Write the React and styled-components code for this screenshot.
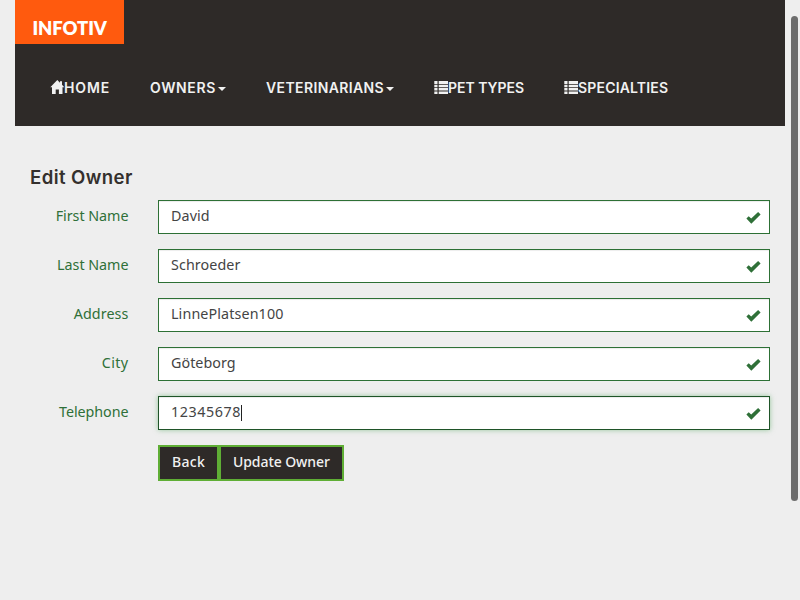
import React from 'react';
import styled, { createGlobalStyle } from 'styled-components';

const Global = createGlobalStyle`
  *, *::before, *::after { box-sizing: border-box; }
  html, body { margin: 0; height: 100%; overflow: hidden; background: #eeeeee; }
  body { font: 14.3px/20px "Noto Sans", sans-serif; color: #34302d; }
`;

const Page = styled.div`
  height: 600px;
  display: flex;
  justify-content: space-between;
  padding-left: 15px;
`;
const Main = styled.main`
  width: 770px;
`;
const Navbar = styled.header`
  height: 126px;
  background: #2e2a28;
`;
const Brand = styled.div`
  width: 109px;
  height: 44px;
  padding: 16px 0 0 17.5px;
  background: #ff5a0e;
  color: #fff;
  font: 800 18.4px/25px Lato, sans-serif;
  letter-spacing: -0.1px;
`;
const Nav = styled.nav`
  display: flex;
  gap: 40px;
  padding: 34px 0 0 35px;
`;
const NavLink = styled.a`
  display: flex;
  align-items: center;
  height: 20px;
  color: #f1f1f1;
  white-space: nowrap;
  font: 600 14px/20px Inter, sans-serif;
`;
const NavText = styled.span`
  width: ${p => p.$w}px;
  letter-spacing: ${p => p.$ls}px;
`;
const Caret = styled.span`
  margin: 2px 0 0 2px;
  border: 4px solid transparent;
  border-top-color: #f1f1f1;
  border-bottom: 0;
`;
const Icon = styled.svg`
  display: block;
  flex: none;
  width: 14px;
  height: 14px;
  fill: currentColor;
  overflow: visible;
`;
const Form = styled.form`
  padding: 40px 15px 0;
`;
const Title = styled.h2`
  margin: 0 0 12px;
  height: 22px;
  font: 600 18.6px/23px Inter, sans-serif;
  letter-spacing: 0.42px;
  color: #34302d;
`;
const Row = styled.div`
  display: grid;
  grid-template-columns: 98.5px 612px;
  column-gap: 29.5px;
  height: 34px;
  margin-bottom: 15px;
`;
const Label = styled.label`
  color: #2f7038;
  line-height: 32px;
  text-align: right;
  white-space: nowrap;
  letter-spacing: ${p => p.$ls}px;
`;
const Field = styled.div`
  display: flex;
  align-items: center;
  justify-content: space-between;
  height: 34px;
  padding: 1px 9px 0 12px;
  background: #fff;
  border: 1px solid ${p => (p.$focus ? '#1f5428' : '#2d7035')};
  box-shadow: ${p => (p.$focus
    ? 'inset 0 1px 1px rgba(0,0,0,.075), 0 0 5px rgba(90,170,100,.6)'
    : 'inset 0 1px 1px rgba(0,0,0,.075)')};
  color: #2f7038;
`;
const Value = styled.span`
  display: flex;
  align-items: center;
  height: 31px;
  padding-bottom: 3px;
  color: #444;
  letter-spacing: ${p => p.$ls}px;
`;
const TextCursor = styled.span`
  width: 1px;
  height: 16px;
  margin-top: 2px;
  background: #222;
`;
const Actions = styled.div`
  display: flex;
  padding-left: 128px;
`;
const Button = styled.button`
  width: ${p => p.$w}px;
  height: 36px;
  padding: 0 0 2px 12px;
  border: 2px solid #5fae35;
  background: #2e2a28;
  color: #f1f1f1;
  font: 500 14px/20px "Noto Sans", sans-serif;
  letter-spacing: ${p => p.$ls}px;
  text-align: left;
  white-space: nowrap;
`;
const Scrollbar = styled.div`
  width: 7px;
  height: 485px;
  margin: 16px 2px 0 0;
  border-radius: 3.5px;
  background: #6d6d6d;
`;

const HomeIcon = () => (
  <Icon viewBox="0 0 14 14"><path d="M7.3-1 .3 6.2H2V13h3.7V8.4h3.2V13h3.6V6.2h1.8L12 3.8V.3H10v1.5z" /></Icon>
);
const ListIcon = () => (
  <Icon viewBox="0 0 14 14"><path d="M.3 0h3.2v2.9H.3zM4.7 0H14v2.9H4.7zM.3 3.7h3.2v2.5H.3zM4.7 3.7H14v2.5H4.7zM.3 7h3.2v2.6H.3zM4.7 7H14v2.6H4.7zM.3 10.4h3.2v2.6H.3zM4.7 10.4H14v2.6H4.7z" /></Icon>
);
const CheckIcon = () => (
  <Icon viewBox="0 0 14 14"><path d="M.4 7.6 2.7 5.2 5.2 7.5 12.1 1 14.6 3.4 5.3 12.7z" /></Icon>
);

const links = [
  { text: 'HOME', w: 46, ls: 0.85, icon: HomeIcon },
  { text: 'OWNERS', w: 66, ls: 0.63 },
  { text: 'VETERINARIANS', w: 118, ls: 0.38 },
  { text: 'PET TYPES', w: 76, ls: -0.03, icon: ListIcon },
  { text: 'SPECIALTIES', w: 90, ls: 0.18, icon: ListIcon },
];
const fields = [
  { label: 'First Name', lls: -0.02, value: 'David', vls: 0.1 },
  { label: 'Last Name', lls: -0.02, value: 'Schroeder', vls: 0.1 },
  { label: 'Address', lls: 0.1, value: 'LinnePlatsen100', vls: 0.12 },
  { label: 'City', lls: 0.4, value: 'Göteborg', vls: 0.05 },
  { label: 'Telephone', lls: -0.05, value: '12345678', vls: 0.57, focus: true },
];

export default function App() {
  return (
    <>
      <Global />
      <Page>
        <Main>
          <Navbar>
            <Brand>INFOTIV</Brand>
            <Nav>
              {links.map(({ text, w, ls, icon: Glyph }) => (
                <NavLink key={text}>
                  {Glyph && <Glyph />}
                  <NavText $w={w} $ls={ls}>{text}</NavText>
                  {!Glyph && <Caret />}
                </NavLink>
              ))}
            </Nav>
          </Navbar>
          <Form>
            <Title>Edit Owner</Title>
            {fields.map(f => (
              <Row key={f.label}>
                <Label $ls={f.lls}>{f.label}</Label>
                <Field $focus={f.focus}>
                  <Value $ls={f.vls}>{f.value}{f.focus && <TextCursor />}</Value>
                  <CheckIcon />
                </Field>
              </Row>
            ))}
            <Actions>
              <Button type="button" $w={61} $ls={0.35}>Back</Button>
              <Button type="button" $w={125} $ls={-0.08}>Update Owner</Button>
            </Actions>
          </Form>
        </Main>
        <Scrollbar />
      </Page>
    </>
  );
}
